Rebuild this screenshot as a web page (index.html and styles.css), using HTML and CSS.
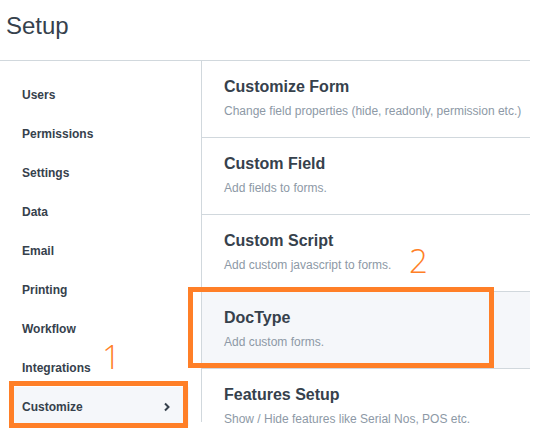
FILE: index.html
```html
<!DOCTYPE html>
<html>
<head>
<meta charset="utf-8">
<link rel="stylesheet" href="styles.css">
</head>
<body>
<div class="page">
  <header class="page-head"><h1 class="page-title">Setup</h1></header>
  <div class="layout">
    <nav class="sidebar">
      <div class="nav-item">Users</div>
      <div class="nav-item">Permissions</div>
      <div class="nav-item">Settings</div>
      <div class="nav-item">Data</div>
      <div class="nav-item">Email</div>
      <div class="nav-item">Printing</div>
      <div class="nav-item">Workflow</div>
      <div class="nav-item">Integrations</div>
      <div class="nav-item active">Customize
        <svg class="chev" width="8" height="10" viewBox="0 0 8 10"><polyline points="2,1.5 5.5,5 2,8.5" fill="none" stroke="#36414c" stroke-width="2"/></svg>
      </div>
    </nav>
    <main class="list">
      <div class="row"><div class="row-title">Customize Form</div><div class="row-desc">Change field properties (hide, readonly, permission etc.)</div></div>
      <div class="row"><div class="row-title">Custom Field</div><div class="row-desc">Add fields to forms.</div></div>
      <div class="row"><div class="row-title">Custom Script</div><div class="row-desc">Add custom javascript to forms.</div></div>
      <div class="row selected"><div class="row-title">DocType</div><div class="row-desc">Add custom forms.</div></div>
      <div class="row"><div class="row-title">Features Setup</div><div class="row-desc">Show / Hide features like Serial Nos, POS etc.</div></div>
    </main>
  </div>
  <div class="mark box-1"></div>
  <div class="mark box-2"></div>
  <div class="num num-1">1</div>
  <div class="num num-2">2</div>
</div>
</body>
</html>
```
FILE: styles.css
```css
html, body {
  margin: 0;
  padding: 0;
  background: #fff;
}
body {
  font-family: "Liberation Sans", Arial, sans-serif;
  color: #36414c;
  width: 538px;
  height: 433px;
  overflow: hidden;
}
.page {
  position: relative;
  width: 538px;
  height: 433px;
  overflow: hidden;
}
.page-head {
  height: 60px;
  padding-left: 6px;
  box-sizing: border-box;
}
.page-title {
  margin: 0;
  font-size: 24px;
  font-weight: normal;
  line-height: 24px;
  padding-top: 14px;
  color: #36414c;
}
.layout {
  display: flex;
  width: 530px;
  border-top: 1px solid #d1d8dd;
  align-items: flex-start;
}
.sidebar {
  width: 201px;
  flex: none;
  border-right: 1px solid #d1d8dd;
  padding: 14px 0 0;
  height: 347px;
  box-sizing: content-box;
}
.nav-item {
  height: 39px;
  margin: 0 12px 0 10px;
  padding: 0 12px;
  display: flex;
  align-items: center;
  justify-content: space-between;
  font-size: 12px;
  font-weight: bold;
  color: #36414c;
}
.nav-item.active {
  background: #f5f7fa;
}
.chev {
  margin-right: 6px;
}
.list {
  flex: 1;
  min-width: 0;
}
.row {
  height: 77px;
  border-bottom: 1px solid #d1d8dd;
  padding: 16px 0 0 22px;
  box-sizing: border-box;
}
.row.selected {
  background: #f5f7fa;
}
.row-title {
  font-size: 16px;
  font-weight: bold;
  line-height: 20px;
  color: #36414c;
  white-space: nowrap;
}
.row-desc {
  margin-top: 7px;
  font-size: 12px;
  line-height: 15px;
  color: #8d99a6;
  white-space: nowrap;
}
.mark {
  position: absolute;
  border: 5px solid #ff7f27;
  box-sizing: border-box;
}
.box-1 {
  left: 9px;
  top: 381px;
  width: 179px;
  height: 47px;
}
.box-2 {
  left: 188px;
  top: 287px;
  width: 306px;
  height: 81px;
}
.num {
  position: absolute;
  font-family: "Open Sans", sans-serif;
  font-weight: 300;
  font-size: 33px;
  line-height: 1;
  color: #ff7f27;
}
.num-1 {
  left: 102px;
  top: 340px;
}
.num-2 {
  left: 409px;
  top: 244px;
}
```
